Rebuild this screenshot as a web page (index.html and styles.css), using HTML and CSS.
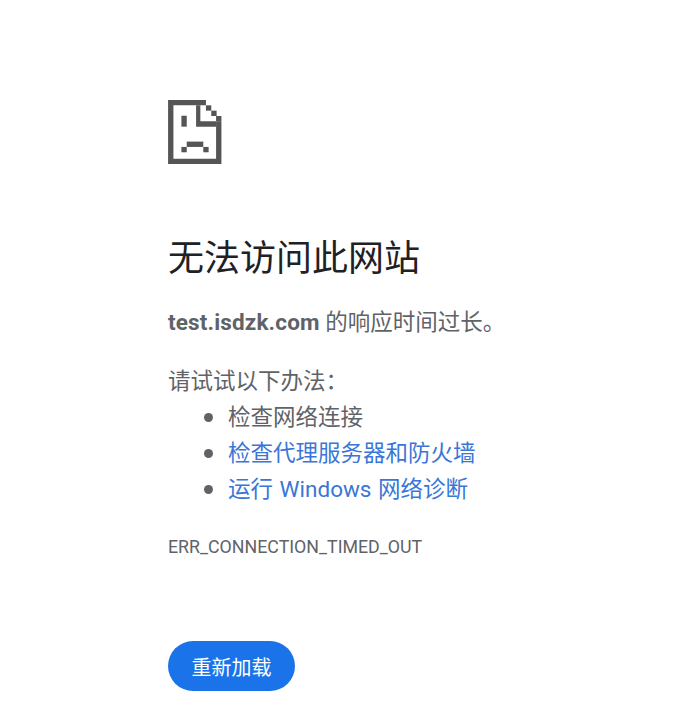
FILE: index.html
```html
<!DOCTYPE html>
<html lang="zh-CN">
<head>
<meta charset="utf-8">
<title>test.isdzk.com</title>
<link rel="stylesheet" href="styles.css">
</head>
<body>
<main class="wrap">
  <svg class="icon" viewBox="0 0 10 12" aria-hidden="true">
    <path class="g" d="M0 0H7.1V1H1V11H9V4H10V12H0Z"/>
    <path class="g" d="M5.25 1H6.05V4H9V5H5.25Z"/>
    <rect class="g" x="7.1" y="1" width="1" height="1"/>
    <rect class="g" x="8.1" y="2" width="1" height="1"/>
    <rect class="g" x="9" y="3" width="1" height="1"/>
    <rect class="g" x="2.5" y="2.95" width="1" height="2.05"/>
    <rect class="g" x="3.5" y="7.8" width="3.1" height="1"/>
    <rect class="g" x="2.5" y="8.8" width="1" height="1"/>
    <rect class="g" x="6.6" y="8.8" width="1" height="1"/>
  </svg>
  <h1 class="title">无法访问此网站</h1>
  <p class="msg"><strong>test.isdzk.com</strong> 的响应时间过长。</p>
  <p class="try">请试试以下办法：</p>
  <ul class="list">
    <li>检查网络连接</li>
    <li><a href="#">检查代理服务器和防火墙</a></li>
    <li><a href="#">运行 Windows 网络诊断</a></li>
  </ul>
  <div class="code">ERR_CONNECTION_TIMED_OUT</div>
  <button class="reload" type="button">重新加载</button>
</main>
</body>
</html>
```
FILE: styles.css
```css
html, body { margin: 0; padding: 0; background: #fff; }
body {
  font-family: Roboto, "Noto Sans CJK SC", sans-serif;
  font-size: 22.5px;
  color: #5f6368;
}
.wrap { padding: 100px 0 0 168px; }
.icon { display: block; width: 53.5px; height: 64px; }
.g { fill: #555; }
.title {
  margin: 71px 0 0;
  font-size: 36px;
  font-weight: 400;
  line-height: 48px;
  color: #202124;
}
.msg { margin: 21px 0 0; line-height: 36px; }
.msg strong { font-weight: 700; letter-spacing: 0.15px; }
.try { margin: 23px 0 0; line-height: 36px; }
.list { margin: 0; padding: 0 0 0 60px; line-height: 36px; list-style: none; }
.list li { position: relative; }
.list li::before {
  content: "";
  position: absolute;
  left: -24px;
  top: 14px;
  width: 9px;
  height: 9px;
  border-radius: 50%;
  background: #5f6368;
}
.list a { color: #3a76d8; text-decoration: none; word-spacing: 1px; }
.code {
  margin-top: 28px;
  font-size: 17.8px;
  line-height: 24px;
}
.reload {
  display: block;
  margin-top: 82px;
  height: 50px;
  padding: 0 23.5px;
  border: 0;
  border-radius: 25px;
  background: #1a73e8;
  color: #fff;
  font: 400 20px Roboto, "Noto Sans CJK SC", sans-serif;
}
```
